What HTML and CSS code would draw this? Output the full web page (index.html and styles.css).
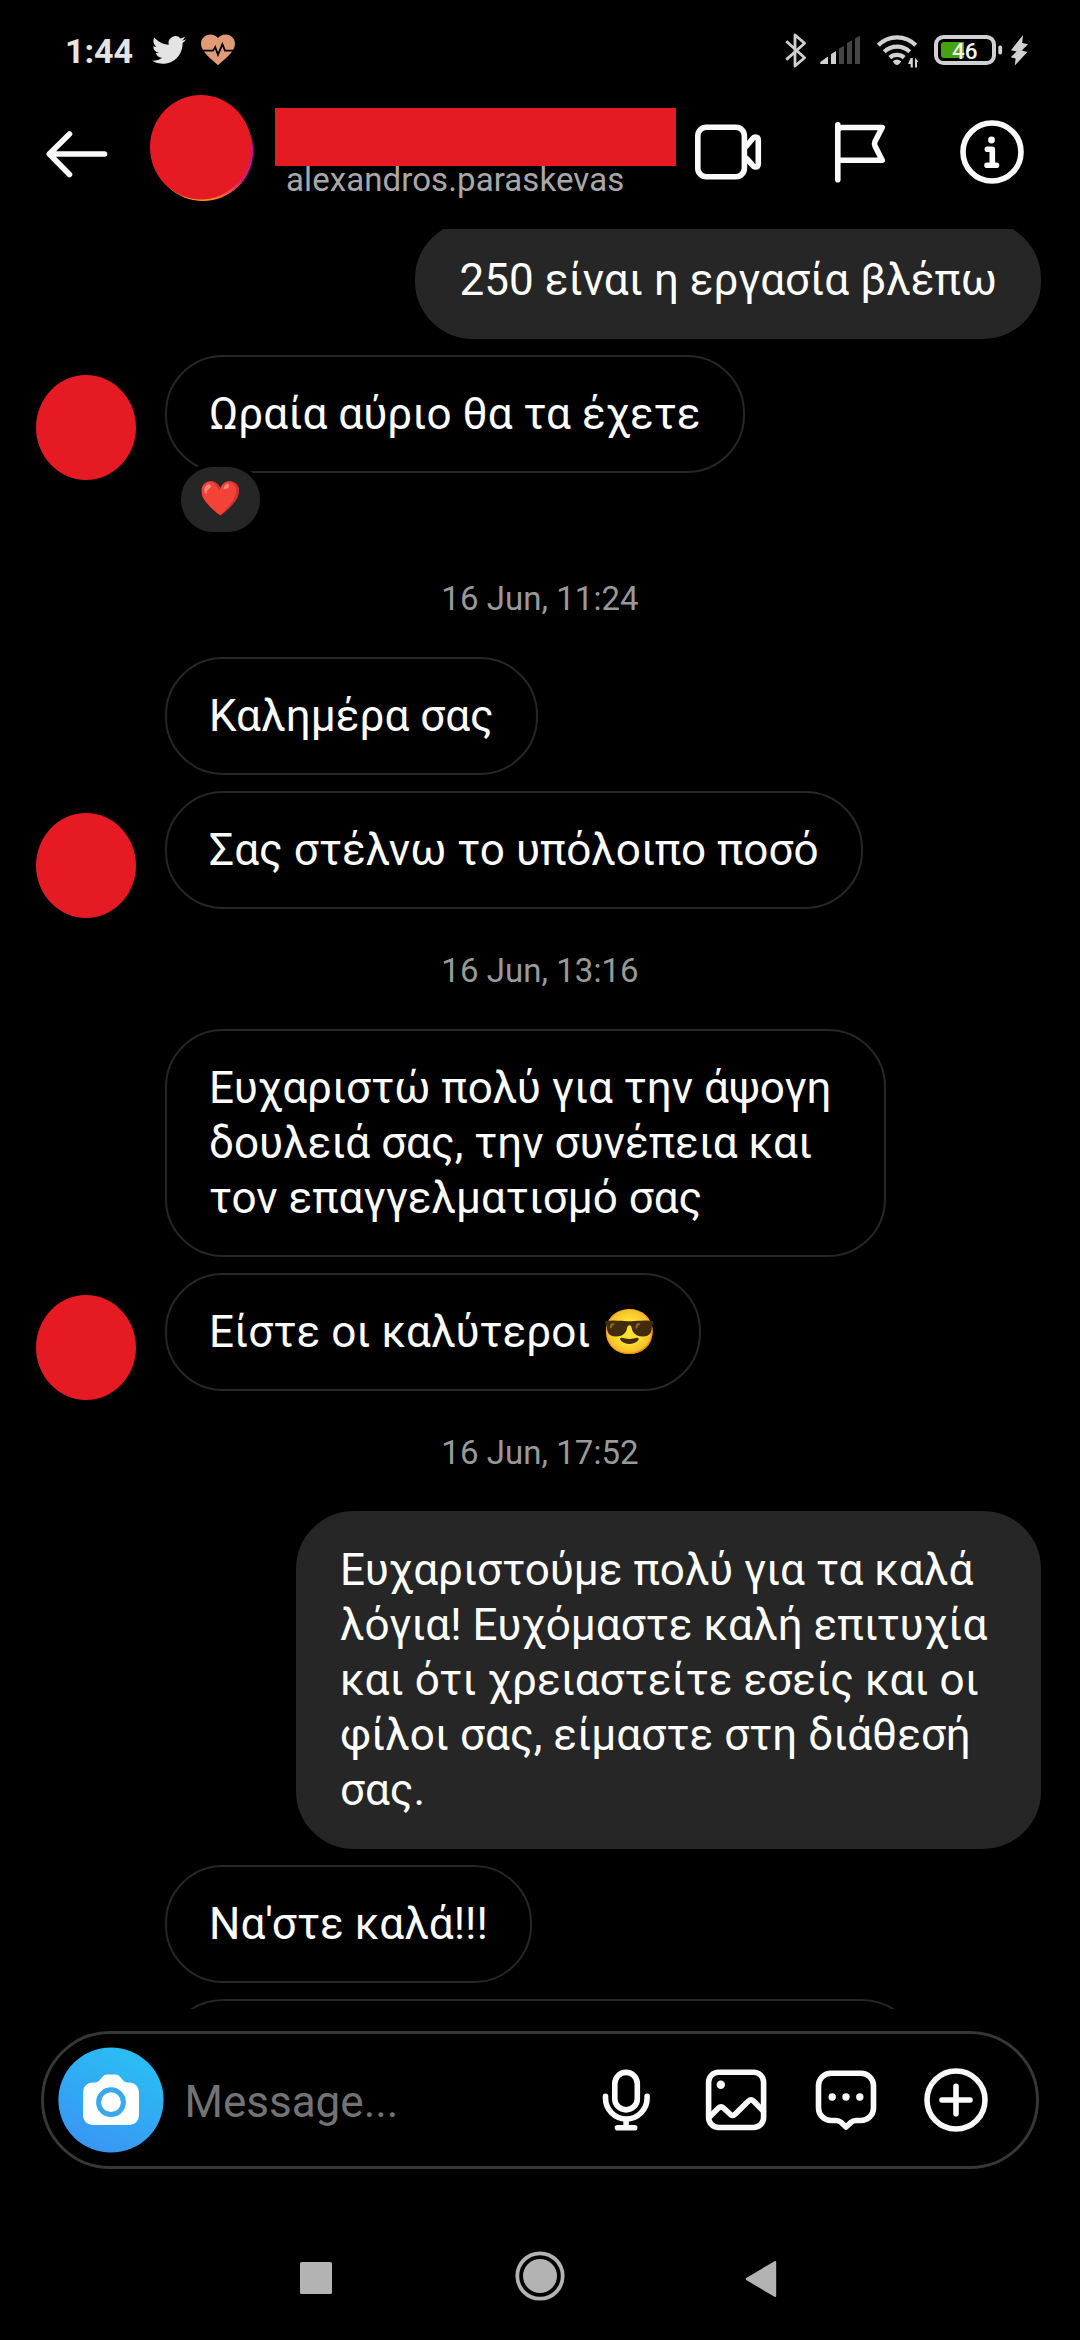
FILE: index.html
```html
<!DOCTYPE html>
<html lang="el">
<head>
<meta charset="utf-8">
<title>Direct</title>
<link rel="stylesheet" href="styles.css">
</head>
<body>
<div class="screen">

  <div class="status">
    <div class="status-left">
      <span class="clock">1:44</span>
      <svg class="twitter" width="34" height="34" viewBox="0 0 24 24"><path d="M23.953 4.57a10 10 0 01-2.825.775 4.958 4.958 0 002.163-2.723c-.951.555-2.005.959-3.127 1.184a4.92 4.92 0 00-8.384 4.482C7.69 8.095 4.067 6.13 1.64 3.162a4.822 4.822 0 00-.666 2.475c0 1.71.87 3.213 2.188 4.096a4.904 4.904 0 01-2.228-.616v.06a4.923 4.923 0 003.946 4.827 4.996 4.996 0 01-2.212.085 4.936 4.936 0 004.604 3.417 9.867 9.867 0 01-6.102 2.105c-.39 0-.779-.023-1.17-.067a13.995 13.995 0 007.557 2.209c9.053 0 13.998-7.496 13.998-13.985 0-.21 0-.42-.015-.63A9.935 9.935 0 0024 4.59z"/></svg>
      <svg class="pulse" width="40" height="40" viewBox="198 30 40 40">
        <path class="pulse-heart" transform="translate(197.6 29.4) scale(1.7 1.68)" d="M12 21.35l-1.45-1.32C5.4 15.36 2 12.28 2 8.5 2 5.42 4.42 3 7.5 3c1.74 0 3.41.81 4.5 2.09C13.09 3.81 14.76 3 16.5 3 19.58 3 22 5.42 22 8.5c0 3.78-3.4 6.86-8.55 11.54L12 21.35z"/>
        <path class="pulse-line" d="M201 50.7h12l2.2-3.6 2.8 7.6 4.4-10.6 2.6 6.6h10.5"/>
      </svg>
    </div>
    <svg class="status-right" width="260" height="40" viewBox="780 30 260 40">
      <path class="st-line" d="M786.3 41.2L804.6 57.8L795 66V35L804.6 43.2L786.3 59.6"/>
      <path class="st-fill" d="M820.3 64v-2l7.7-5.4V64z M831 64V54.3l5-3.3V64z"/>
      <path class="st-dim" d="M839 64V48.4l5-2.4V64z M847 64V43l5-2.7V64z M855 64V38.4l5-2.7V64z"/>
      <g class="st-wifi">
        <path d="M878.3 45.3A26 26 0 0 1 915.7 45.3"/>
        <path d="M884.2 51.8A18.5 18.5 0 0 1 909.8 51.8"/>
        <path d="M889.8 57.6A10.8 10.8 0 0 1 904.2 57.6"/>
      </g>
      <path class="st-fill" d="M892.8 61.2q4.2-3.6 8.4 0q-2 3.8-4.2 3.8t-4.2-3.8z"/>
      <path class="st-fill" d="M910.6 58h2.2v9.5h-2.2v-3.5h-2.6zM915 67.5V57.5l3.4 4.6h-1.4v5.4z"/>
      <rect class="st-battery" x="936" y="37" width="58" height="26" rx="7.5"/>
      <path class="st-charge" d="M944 42h20v16h-20a3 3 0 0 1-3-3v-10a3 3 0 0 1 3-3z"/>
      <text class="st-level" x="952" y="59">46</text>
      <rect class="st-fill" x="998.3" y="45.5" width="3.8" height="9" rx="1.8"/>
      <path class="st-fill" d="M1023 35L1011 50.2l5.600 1.400-5.900 5.600 4.900 1.200L1014.800 65.500 1027.400 52l-5.600-1.400 6.200-6.400-5.800-1.200z"/>
    </svg>
  </div>

  <header class="header">
    <svg class="back" width="70" height="60" viewBox="42 122 70 60"><path class="icon" d="M69.5 134L49.3 154L69.5 174.5M49.5 154H104.5"/></svg>
    <svg class="profile" width="106" height="120" viewBox="149 92 106 120">
      <defs>
        <linearGradient id="story" x1="0" y1="1" x2="1" y2="0">
          <stop offset="0" stop-color="#fdb528"/><stop offset=".3" stop-color="#f58a1f"/><stop offset=".55" stop-color="#e8127c"/><stop offset=".8" stop-color="#b012b0"/>
        </linearGradient>
      </defs>
      <circle cx="203" cy="150.800" r="50.200" fill="url(#story)"/>
      <ellipse class="red" cx="200.800" cy="147.200" rx="50.800" ry="52.200"/>
    </svg>
    <div class="who">
      <div class="name"></div>
      <div class="handle">alexandros.paraskevas</div>
    </div>
    <svg class="video" width="72" height="70" viewBox="692 117 72 70">
      <rect class="icon" x="697.8" y="127.2" width="46.6" height="49.6" rx="8.5"/>
      <path class="icon" d="M746.5 146L751.5 140Q753.5 137 755.5 137Q758.3 137 758.3 140.5V163.5Q758.3 167 755.5 167Q753.5 167 751.5 164L746.5 158.5"/>
    </svg>
    <svg class="flag" width="60" height="70" viewBox="830 117 60 70"><path class="icon" d="M837.8 124.8V179.8M837.8 131Q838.5 127.5 842 127.5H882.2L875 141.5Q874 144 875 146L882.2 160.3H837.8"/></svg>
    <svg width="70" height="70" viewBox="957 117 70 70">
      <circle class="icon" cx="992" cy="152" r="29"/>
      <circle class="icon-dot" cx="991.5" cy="140" r="3.4"/>
      <path class="icon" d="M987.3 149.2H992.3V165.3M987 165.3H996.5"/>
    </svg>
  </header>

  <main class="thread">
    <div class="row out first"><div class="bubble">250 είναι η εργασία βλέπω</div></div>
    <div class="row in reacted">
      <i class="avatar"></i>
      <div class="bubble">Ωραία αύριο θα τα έχετε<span class="reaction">❤️</span></div>
    </div>
    <div class="time">16 Jun, 11:24</div>
    <div class="row in cont"><div class="bubble">Καλημέρα σας</div></div>
    <div class="row in"><i class="avatar"></i><div class="bubble">Σας στέλνω το υπόλοιπο ποσό</div></div>
    <div class="time">16 Jun, 13:16</div>
    <div class="row in cont"><div class="bubble long-in">Ευχαριστώ πολύ για την άψογη<br>δουλειά σας, την συνέπεια και<br>τον επαγγελματισμό σας</div></div>
    <div class="row in"><i class="avatar"></i><div class="bubble">Είστε οι καλύτεροι 😎</div></div>
    <div class="time">16 Jun, 17:52</div>
    <div class="row out"><div class="bubble long-out">Ευχαριστούμε πολύ για τα καλά<br>λόγια! Ευχόμαστε καλή επιτυχία<br>και ότι χρειαστείτε εσείς και οι<br>φίλοι σας, είμαστε στη διάθεσή<br>σας.</div></div>
    <div class="row in cont"><div class="bubble">Να'στε καλά!!!</div></div>
    <div class="row in cont"><div class="bubble next"></div></div>
  </main>

  <div class="composer">
    <svg class="camera" width="106" height="106" viewBox="57.5 2046.5 106 106">
      <defs><linearGradient id="cam" x1=".25" y1="1" x2=".75" y2="0"><stop offset="0" stop-color="#3a94f4"/><stop offset="1" stop-color="#28c0f4"/></linearGradient></defs>
      <circle cx="110.5" cy="2099.5" r="52.6" fill="url(#cam)"/>
      <path fill="#fff" d="M92 2082h3q2.500-.4 4-2.200l3-3.600q1.800-2.200 4.500-2.200h8.500q2.700 0 4.500 2.200l3 3.600q1.500 1.800 4 2.200h2.500a9.500 9.500 0 0 1 9.500 9.500v23.500a9.500 9.500 0 0 1-9.500 9.500H92a9.500 9.500 0 0 1-9.500-9.500v-23.500a9.500 9.500 0 0 1 9.500-9.500z"/>
      <circle cx="110.5" cy="2101.7" r="12.4" fill="#fff" stroke="#38a9ea" stroke-width="5"/>
    </svg>
    <span class="placeholder">Message...</span>
    <svg width="70" height="70" viewBox="591 2065 70 70">
      <rect class="icon" x="614.8" y="2072.4" width="22.5" height="37.5" rx="11.25"/>
      <path class="icon" d="M605.5 2096.3V2098A20.8 21 0 0 0 647.1 2098V2096.3M626.1 2119V2127.7M617.5 2127.7H634.7"/>
    </svg>
    <svg width="70" height="70" viewBox="701 2065 70 70">
      <rect class="icon" x="708.6" y="2072.2" width="55" height="55.3" rx="10"/>
      <circle class="icon-dot" cx="720.8" cy="2084.8" r="4.2"/>
      <path class="icon" d="M709.5 2117L718.5 2108Q721 2105.5 723.5 2108L730.3 2114.3Q732.8 2116.5 735.3 2114L748.5 2101Q751 2098.8 753.5 2101L763.3 2111"/>
    </svg>
    <svg width="70" height="70" viewBox="811 2065 70 70">
      <path class="icon" d="M831 2073.2H861A12.5 12.5 0 0 1 873.5 2085.7V2108A12.5 12.5 0 0 1 861 2120.5H856Q853 2120.5 851 2122.3L846 2127L841 2122.3Q839 2120.5 836 2120.5H831A12.5 12.5 0 0 1 818.5 2108V2085.7A12.5 12.5 0 0 1 831 2073.2Z"/>
      <circle class="icon-dot" cx="832.2" cy="2097" r="3.7"/><circle class="icon-dot" cx="846" cy="2097" r="3.7"/><circle class="icon-dot" cx="859.8" cy="2097" r="3.7"/>
    </svg>
    <svg width="70" height="70" viewBox="921 2065 70 70">
      <circle class="icon" cx="956" cy="2100" r="29"/>
      <path class="icon" d="M956 2086.2V2113.8M942 2100H970"/>
    </svg>
  </div>

  <nav class="nav">
    <svg width="32" height="32" viewBox="0 0 32 32"><rect width="32" height="32" rx="1.5"/></svg>
    <svg class="home" width="50" height="50" viewBox="0 0 50 50"><circle cx="25" cy="25" r="17"/><circle class="home-ring" cx="25" cy="25" r="22.7"/></svg>
    <svg class="nav-back" width="32" height="38" viewBox="0 0 32 38"><path d="M29.5 1.2Q31.2.4 31.2 2V36Q31.2 37.6 29.5 36.8L1.2 20Q0 19 1.2 18Z"/></svg>
  </nav>
</div>
</body>
</html>
```
FILE: styles.css
```css
* { box-sizing: border-box; }

body {
  margin: 0;
  background: #000;
  color: #fff;
  font-family: Roboto, "Noto Sans", sans-serif;
}

svg { display: block; flex: none; }

.screen {
  width: 1080px;
  height: 2340px;
  display: flex;
  flex-direction: column;
  overflow: hidden;
}

/* Shared icon strokes */
.icon {
  fill: none;
  stroke: #fafafa;
  stroke-width: 5.6;
  stroke-linecap: round;
  stroke-linejoin: round;
}
.icon-dot { fill: #fafafa; }
.red { fill: #e61a23; }

/* Status bar */
.status {
  height: 80px;
  padding: 30px 40px 0 65px;
  display: flex;
  justify-content: space-between;
  align-items: flex-start;
  flex: none;
}
.status-left { display: flex; height: 40px; }
.clock {
  width: 87px;
  font-size: 34px;
  line-height: 42px;
  font-weight: 700;
  color: #e4e4e4;
}
.twitter { margin-top: 3px; fill: #e4e4e4; }
.pulse { margin-left: 12px; }
.pulse-heart { fill: #df9b78; }
.pulse-line { fill: none; stroke: #000; stroke-width: 1.8; }
.st-line { fill: none; stroke: #cfcfcf; stroke-width: 2.8; stroke-linejoin: round; }
.st-fill { fill: #d2d2d2; }
.st-dim { fill: #454545; }
.st-wifi { fill: none; stroke: #d2d2d2; stroke-width: 4.2; }
.st-battery { fill: none; stroke: #d0cfd2; stroke-width: 4; }
.st-charge { fill: #46a30f; }
.st-level { fill: #f6f6f6; font-size: 22.5px; font-weight: 500; }

/* Conversation header */
.header {
  height: 144px;
  padding-right: 53px;
  display: flex;
  align-items: center;
  flex: none;
}
.back { margin-left: 42px; }
.profile { margin-left: 37px; }
.who { width: 401px; margin: 28px 0 0 20px; align-self: flex-start; }
.name { position: relative; height: 58px; background: #e61a23; }
.handle {
  margin-top: -6px;
  padding-left: 11px;
  font-size: 33px;
  line-height: 39px;
  letter-spacing: 0.09px;
  color: #a8a8a8;
}
.video { margin-left: 16px; }
.flag { margin: 0 67px 0 66px; }

/* Messages */
.thread {
  height: 1780px;
  margin-top: 5px;
  overflow: hidden;
  flex: none;
}
.row {
  display: flex;
  align-items: flex-end;
  padding: 0 39px 0 36px;
  margin-bottom: 16px;
}
.row:has(+ .time) { margin-bottom: 0; }
.out { justify-content: flex-end; }
.first { margin-top: -8px; }
.in { gap: 29px; }
.cont { padding-left: 165px; }
.reacted.in { margin-bottom: 64px; }
.reacted .avatar { margin-bottom: -7px; }

.bubble {
  position: relative;
  padding: 29.5px 42px;
  min-height: 118px;
  border: 2px solid #262626;
  border-radius: 58px;
  font-size: 44px;
  line-height: 55px;
  letter-spacing: 0.03px;
  white-space: nowrap;
}
.out .bubble { background: #262626; }
.long-in { width: 721px; }
.long-out { width: 745px; }
.next { width: 755px; }

.avatar {
  width: 100px;
  height: 105px;
  margin-bottom: -9px;
  border-radius: 50%;
  background: #e61a23;
  flex: none;
}

.reaction {
  position: absolute;
  left: 10px;
  top: 106px;
  width: 87px;
  height: 73px;
  border: 4px solid #000;
  border-radius: 37px;
  background: #262626;
  font-size: 34px;
  line-height: 63px;
  text-align: center;
}

.time {
  height: 120px;
  line-height: 124px;
  font-size: 33px;
  letter-spacing: 0.05px;
  text-align: center;
  color: #999;
}

/* Message field */
.composer {
  height: 138px;
  margin: 22px 41px 0;
  padding: 0 45px 0 13.5px;
  display: flex;
  align-items: center;
  gap: 40px;
  border: 3px solid #373737;
  border-radius: 69px;
  flex: none;
}
.camera { margin-top: -1px; }
.placeholder {
  flex: 1;
  margin-left: -19px;
  padding-top: 3px;
  font-size: 44px;
  color: #737373;
}

/* System navigation */
.nav {
  padding: 91px 0 0 300px;
  display: flex;
  gap: 182.5px;
  fill: #b3b3b3;
}
.nav svg { margin-top: 2px; }
.nav .home { margin-top: -9.5px; }
.nav .nav-back { margin: 0 0 0 -2px; }
.nav .home-ring { fill: none; stroke: #b3b3b3; stroke-width: 3.8; }
```
